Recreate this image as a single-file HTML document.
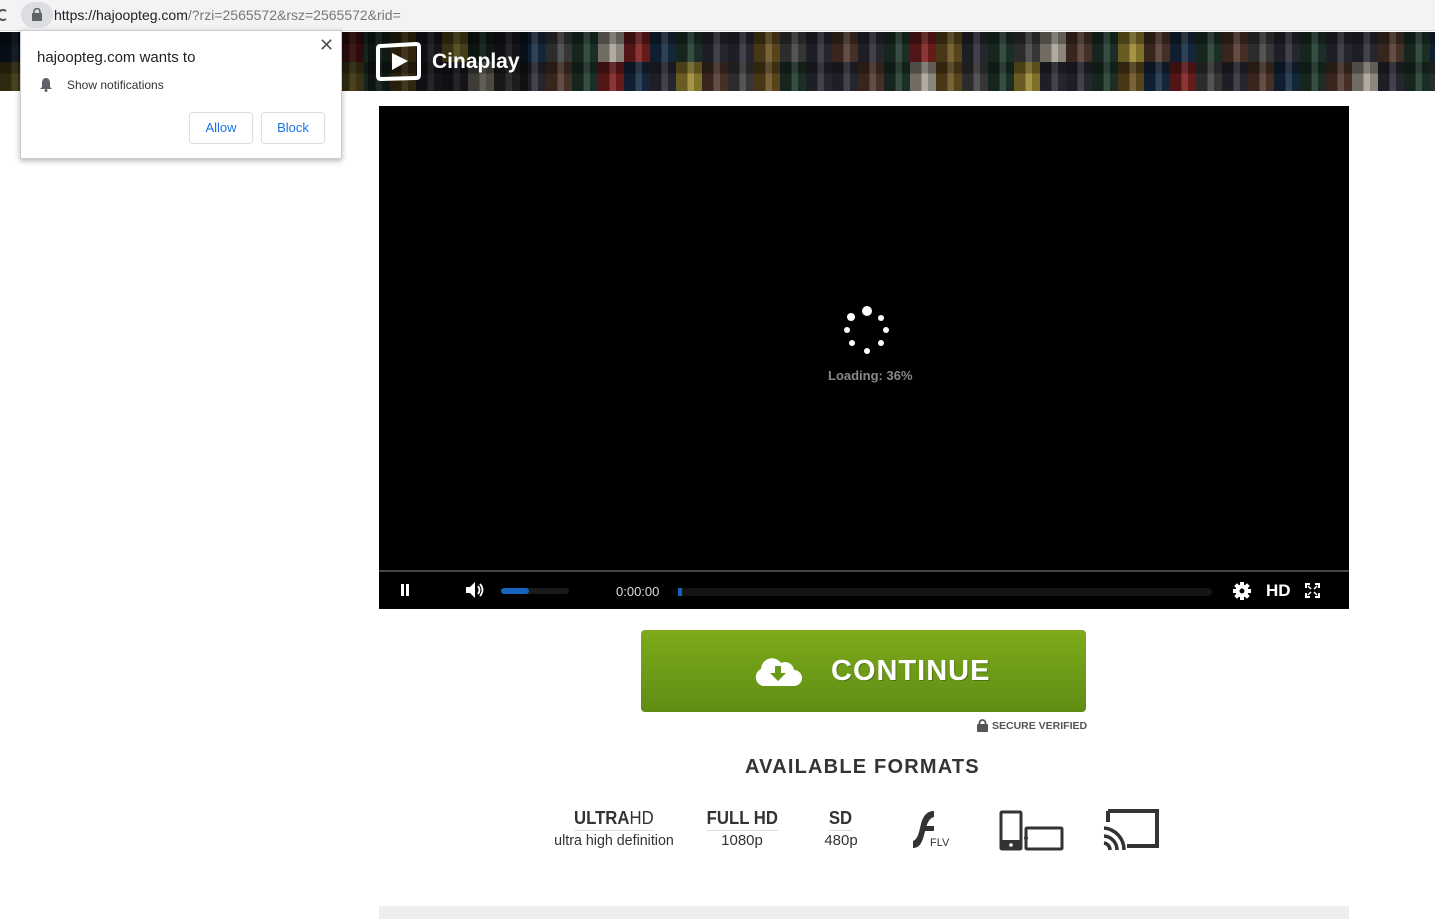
<!DOCTYPE html>
<html><head><meta charset="utf-8"><style>
*{margin:0;padding:0;box-sizing:border-box}
body{width:1435px;height:919px;overflow:hidden;background:#fff;font-family:"Liberation Sans",sans-serif;position:relative}
.addr{position:absolute;left:0;top:0;width:1435px;height:31px;background:#f1f3f4;border-bottom:1px solid #dadce0}
.lockpill{position:absolute;left:21px;top:2px;width:32px;height:26px;border-radius:13px;background:#dcdde0}
.url{position:absolute;left:54px;top:7px;font-size:14px;color:#777}
.url b{font-weight:normal;color:#222}
.banner{position:absolute;left:0;top:32px;width:1435px;height:59px;display:grid;grid-template-columns:repeat(56,26px);grid-template-rows:30px 29px;overflow:hidden;background:#222;filter:brightness(.8)}
.banner i{display:block;background-color:#3a3a4a;background-image:linear-gradient(90deg,rgba(0,0,0,.35) 45%,rgba(255,255,255,.12) 45%,rgba(255,255,255,.12) 70%,rgba(0,0,0,.2) 70%),linear-gradient(rgba(0,0,0,.3) 40%,transparent 40%)}
.banner i:nth-child(3n){background-color:#6b4a3a}
.banner i:nth-child(5n+1){background-color:#1f3b5a}
.banner i:nth-child(7n+2){background-color:#8a6a2a}
.banner i:nth-child(11n+3){background-color:#a02a2a}
.banner i:nth-child(4n+3){background-color:#2a4a3a}
.banner i:nth-child(13n+5){background-color:#c8b040}
.banner i:nth-child(9n+4){background-color:#555}
.banner i:nth-child(17n+7){background-color:#d8d0c0}
.banner i:nth-child(-n+14),.banner i:nth-child(n+57):nth-child(-n+70){filter:brightness(.45)}
.logo{position:absolute;left:368px;top:32px;width:160px;height:59px;background:rgba(0,0,0,.45)}
.video{position:absolute;left:379px;top:106px;width:970px;height:503px;background:#000}
.ctrl{position:absolute;left:0;top:464px;width:970px;height:39px;border-top:2px solid #444;background:#000}
.dot{position:absolute;background:#fff;border-radius:50%}
.cont{position:absolute;left:641px;top:630px;width:445px;height:82px;border-radius:4px;background:linear-gradient(#7eaa1b,#5f8d14)}
.cont span{position:absolute;left:190px;top:25px;font-size:29px;font-weight:bold;color:#fff;letter-spacing:1px;font-family:"Liberation Sans",sans-serif;text-shadow:1px 1px 0 rgba(0,0,0,.25)}
.fmt{position:absolute;text-align:center;color:#333;font-size:15px}
.fmt .t{font-size:18px;font-weight:bold;border-bottom:1px solid #ddd;display:inline-block;padding-bottom:1px;margin-bottom:1px;transform:scaleX(.93)}
.popup{position:absolute;left:20px;top:30px;width:322px;height:129px;background:#fff;border:1px solid #ccc;border-radius:2px;box-shadow:0 2px 6px rgba(0,0,0,.3)}
.btn{position:absolute;top:81px;width:64px;height:32px;border:1px solid #dadce0;border-radius:4px;color:#1a73e8;font-size:13px;text-align:center;line-height:30px}
</style></head><body>
<div class="addr">
<svg style="position:absolute;left:0;top:8px" width="8" height="14"><path d="M6 3A5 5 0 1 0 6 11" stroke="#555" stroke-width="2" fill="none"/></svg>
<div class="lockpill"><svg style="position:absolute;left:11px;top:6px" width="10" height="13"><rect x="0" y="5" width="10" height="8" fill="#5f6368"/><path d="M2 6V3.5a3 3 0 0 1 6 0V6" stroke="#5f6368" stroke-width="1.6" fill="none"/></svg></div>
<div class="url"><b>https://hajoopteg.com</b>/?rzi=2565572&amp;rsz=2565572&amp;rid=</div>
</div>
<div class="banner">
<i></i><i></i><i></i><i></i><i></i><i></i><i></i><i></i><i></i><i></i><i></i><i></i><i></i><i></i><i></i><i></i><i></i><i></i><i></i><i></i><i></i><i></i><i></i><i></i><i></i><i></i><i></i><i></i><i></i><i></i><i></i><i></i><i></i><i></i><i></i><i></i><i></i><i></i><i></i><i></i><i></i><i></i><i></i><i></i><i></i><i></i><i></i><i></i><i></i><i></i><i></i><i></i><i></i><i></i><i></i><i></i>
<i></i><i></i><i></i><i></i><i></i><i></i><i></i><i></i><i></i><i></i><i></i><i></i><i></i><i></i><i></i><i></i><i></i><i></i><i></i><i></i><i></i><i></i><i></i><i></i><i></i><i></i><i></i><i></i><i></i><i></i><i></i><i></i><i></i><i></i><i></i><i></i><i></i><i></i><i></i><i></i><i></i><i></i><i></i><i></i><i></i><i></i><i></i><i></i><i></i><i></i><i></i><i></i><i></i><i></i><i></i><i></i>
</div>
<div class="logo">
<svg style="position:absolute;left:8px;top:10px" width="46" height="40"><path d="M4 4L40 2Q43 2 43 5V33Q43 36 40 36L5 37Q2 37 2 34V7Q2 4 4 4Z" fill="none" stroke="#fff" stroke-width="4"/><path d="M16 11L32 19L16 28Z" fill="#fff"/></svg>
<div style="position:absolute;left:64px;top:18px;color:#fff;font-size:21px;font-weight:bold;font-family:'Liberation Sans',sans-serif">Cinaplay</div>
</div>
<div class="popup">
<div style="position:absolute;left:16px;top:18px;font-size:15px;color:#222">hajoopteg.com wants to</div>
<svg style="position:absolute;left:18px;top:46px" width="14" height="15"><path d="M7 1C4 1 3 4 3 6V10L1 12H13L11 10V6C11 4 10 1 7 1Z" fill="#5f6368"/><circle cx="7" cy="13.5" r="1.5" fill="#5f6368"/></svg>
<div style="position:absolute;left:46px;top:47px;font-size:12px;color:#333">Show notifications</div>
<div style="position:absolute;left:298px;top:4px;font-size:18px;color:#555">✕</div>
<div class="btn" style="left:168px">Allow</div>
<div class="btn" style="left:240px">Block</div>
</div>
<div class="video">
<div class="dot" style="left:483px;top:200px;width:10px;height:10px"></div>
<div class="dot" style="left:468px;top:207px;width:8px;height:8px"></div>
<div class="dot" style="left:499px;top:209px;width:6px;height:6px"></div>
<div class="dot" style="left:465px;top:221px;width:6px;height:6px"></div>
<div class="dot" style="left:504px;top:221px;width:6px;height:6px"></div>
<div class="dot" style="left:470px;top:234px;width:6px;height:6px"></div>
<div class="dot" style="left:499px;top:234px;width:6px;height:6px"></div>
<div class="dot" style="left:485px;top:242px;width:6px;height:6px"></div>
<div style="position:absolute;left:449px;top:262px;color:#888;font-size:13px;font-weight:bold;font-family:'Liberation Sans',sans-serif">Loading: 36%</div>
<div class="ctrl">
<div style="position:absolute;left:22px;top:12px;width:3px;height:12px;background:#fff"></div><div style="position:absolute;left:27px;top:12px;width:3px;height:12px;background:#fff"></div>
<svg style="position:absolute;left:86px;top:9px" width="22" height="18"><path d="M1 6H5L10 1V17L5 12H1Z" fill="#fff"/><path d="M13 5Q16 9 13 13M15 3Q20 9 15 15" stroke="#fff" stroke-width="1.8" fill="none"/></svg>
<div style="position:absolute;left:122px;top:16px;width:68px;height:6px;border-radius:3px;background:#1a1a1a"></div>
<div style="position:absolute;left:122px;top:16px;width:28px;height:6px;border-radius:3px;background:#1565c0"></div>
<div style="position:absolute;left:237px;top:12px;color:#ddd;font-size:13px">0:00:00</div>
<div style="position:absolute;left:299px;top:16px;width:534px;height:8px;border-radius:4px;background:#151515"></div>
<div style="position:absolute;left:299px;top:16px;width:4px;height:8px;background:#1565c0"></div>
<svg style="position:absolute;left:853px;top:9px" width="20" height="20" viewBox="0 0 20 20"><g fill="#fff"><circle cx="10" cy="10" r="6.5"/><rect x="8" y="1" width="4" height="18"/><rect x="1" y="8" width="18" height="4"/><rect x="8" y="1" width="4" height="18" transform="rotate(45 10 10)"/><rect x="8" y="1" width="4" height="18" transform="rotate(-45 10 10)"/></g><circle cx="10" cy="10" r="2.5" fill="#000"/></svg>
<div style="position:absolute;left:887px;top:9px;color:#fff;font-size:17px;font-weight:bold">HD</div>
<svg style="position:absolute;left:926px;top:11px" width="15" height="15"><path d="M0 0H5V2H2V5H0ZM15 0V5H13V2H10V0ZM0 15V10H2V13H5V15ZM15 15H10V13H13V10H15Z" fill="#fff"/><path d="M3 3L6 6M12 3L9 6M3 12L6 9M12 12L9 9" stroke="#fff" stroke-width="1.5"/></svg>
</div>
</div>
<div class="cont">
<svg style="position:absolute;left:112px;top:25px" width="50" height="32"><path d="M10 31A9 9 0 0 1 8 14A11 11 0 0 1 28 8A9 9 0 0 1 41 15A8 8 0 0 1 41 31Z" fill="#fff"/><path d="M22 11H28V18H33L25 26L17 18H22Z" fill="#6a9818"/></svg>
<span>CONTINUE</span>
</div>
<svg style="position:absolute;left:977px;top:719px" width="11" height="13"><rect x="0" y="5" width="11" height="8" rx="1" fill="#555"/><path d="M2.5 6V4a3 3 0 0 1 6 0V6" stroke="#555" stroke-width="1.8" fill="none"/></svg>
<div style="position:absolute;left:992px;top:720px;font-size:10.5px;font-weight:bold;color:#555;font-family:'Liberation Sans',sans-serif">SECURE VERIFIED</div>
<div style="position:absolute;left:745px;top:756px;font-size:20px;font-weight:bold;color:#333;letter-spacing:1.2px;font-family:'Liberation Sans',sans-serif;white-space:nowrap">AVAILABLE FORMATS</div>
<div class="fmt" style="left:548px;top:808px;width:132px"><div class="t"><b>ULTRA</b><span style="font-weight:normal">HD</span></div><div style="transform:scaleX(.95)">ultra high definition</div></div>
<div class="fmt" style="left:700px;top:808px;width:84px"><div class="t">FULL HD</div><div>1080p</div></div>
<div class="fmt" style="left:818px;top:808px;width:46px"><div class="t">SD</div><div>480p</div></div>
<svg style="position:absolute;left:910px;top:810px" width="42" height="40"><path d="M3 38C12 38 13 28 16 18C18 10 21 8 24 7V1C17 1 13 6 11 14C9 22 8 29 3 31Z" fill="#333"/><rect x="14" y="16" width="10" height="5" fill="#333"/><text x="20" y="36" font-size="11" fill="#333" font-family="Liberation Sans">FLV</text></svg>
<svg style="position:absolute;left:999px;top:810px" width="66" height="42"><rect x="2" y="2" width="20" height="37" rx="1" fill="none" stroke="#333" stroke-width="3"/><rect x="2" y="30" width="20" height="9" fill="#333"/><circle cx="12" cy="35" r="1.8" fill="#fff"/><rect x="27" y="18" width="36" height="21" rx="1" fill="none" stroke="#333" stroke-width="3"/><circle cx="27" cy="28" r="2" fill="#333"/></svg>
<svg style="position:absolute;left:1102px;top:808px" width="58" height="44"><path d="M6 3H55V38H25" fill="none" stroke="#333" stroke-width="4"/><path d="M6 3V14" stroke="#333" stroke-width="4"/><path d="M2 20A22 22 0 0 1 22 42M2 28A14 14 0 0 1 15 42M2 35A7 7 0 0 1 8 42" fill="none" stroke="#333" stroke-width="3.5"/></svg>
<div style="position:absolute;left:379px;top:906px;width:970px;height:13px;background:#eee"></div>
</body></html>
